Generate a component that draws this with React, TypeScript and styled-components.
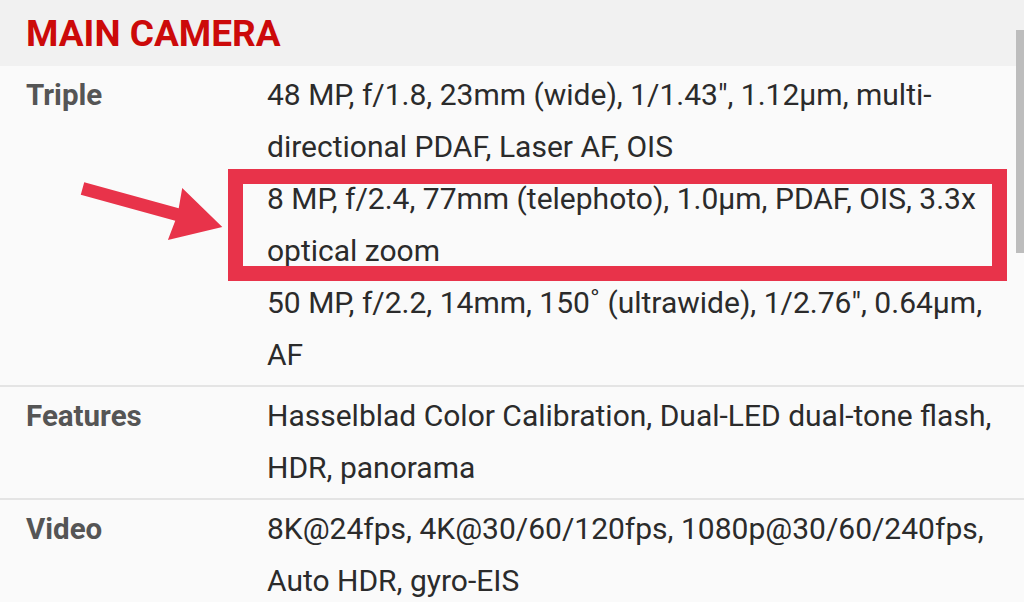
import * as React from "react";
import styled, { createGlobalStyle } from "styled-components";

const COLORS = {
  page: "#fafafa",
  header: "#f1f1f1",
  title: "#cc0a0a",
  label: "#555555",
  value: "#2b2b2b",
  rule: "#e4e4e4",
  mark: "#e8334a",
  scroll: "#bdbdbd",
};

const GlobalStyle = createGlobalStyle`
  html, body {
    margin: 0;
    padding: 0;
    background: ${COLORS.page};
    font-family: Roboto, "Liberation Sans", sans-serif;
  }
`;

const Page = styled.div`
  position: relative;
  width: 1024px;
  height: 602px;
  overflow: hidden;
  background: ${COLORS.page};
`;

const Header = styled.div`
  height: 66px;
  display: flex;
  align-items: center;
  padding-left: 26px;
  background: ${COLORS.header};
`;

const Title = styled.h2`
  margin: 0;
  font-size: 37px;
  font-weight: 700;
  color: ${COLORS.title};
`;

const Row = styled.div`
  display: grid;
  grid-template-columns: 241px 1fr;
  padding: 3px 0 4px 26px;
  border-bottom: 2px solid ${COLORS.rule};
  &:last-child {
    border-bottom: none;
  }
`;

const Label = styled.div`
  font-size: 29.5px;
  line-height: 52px;
  font-weight: 700;
  color: ${COLORS.label};
`;

const Values = styled.div`
  display: flex;
  flex-direction: column;
`;

const Entry = styled.div<{ $marked?: boolean }>`
  position: relative;
  &::before {
    content: "";
    display: ${(p) => (p.$marked ? "block" : "none")};
    position: absolute;
    left: -39px;
    top: -4px;
    width: 779px;
    height: 112px;
    box-sizing: border-box;
    border: 15px solid ${COLORS.mark};
    pointer-events: none;
  }
`;

const Line = styled.div`
  font-size: 30px;
  line-height: 52px;
  color: ${COLORS.value};
  white-space: nowrap;
`;

const Arrow = styled.svg`
  position: absolute;
  left: 0;
  top: 0;
  width: 1024px;
  height: 602px;
  pointer-events: none;
`;

const ScrollThumb = styled.div`
  position: absolute;
  right: 0;
  top: 30px;
  width: 8px;
  height: 223px;
  background: ${COLORS.scroll};
`;

const SPECS = [
  {
    label: "Triple",
    entries: [
      { lines: ["48 MP, f/1.8, 23mm (wide), 1/1.43\", 1.12µm, multi-", "directional PDAF, Laser AF, OIS"] },
      { lines: ["8 MP, f/2.4, 77mm (telephoto), 1.0µm, PDAF, OIS, 3.3x", "optical zoom"], marked: true },
      { lines: ["50 MP, f/2.2, 14mm, 150˚ (ultrawide), 1/2.76\", 0.64µm,", "AF"] },
    ],
  },
  {
    label: "Features",
    entries: [{ lines: ["Hasselblad Color Calibration, Dual-LED dual-tone flash,", "HDR, panorama"] }],
  },
  {
    label: "Video",
    entries: [{ lines: ["8K@24fps, 4K@30/60/120fps, 1080p@30/60/240fps,", "Auto HDR, gyro-EIS"] }],
  },
];

export default function App() {
  return (
    <Page>
      <GlobalStyle />
      <Header>
        <Title>MAIN CAMERA</Title>
      </Header>
      {SPECS.map((spec) => (
        <Row key={spec.label}>
          <Label>{spec.label}</Label>
          <Values>
            {spec.entries.map((entry, i) => (
              <Entry key={i} $marked={entry.marked}>
                {entry.lines.map((l) => (
                  <Line key={l}>{l}</Line>
                ))}
              </Entry>
            ))}
          </Values>
        </Row>
      ))}
      <Arrow viewBox="0 0 1024 602">
        <polygon
          transform="translate(82.5 188.5) rotate(15.4)"
          points="0,-6.5 98,-6.5 96,-27 145,0 96,27 98,6.5 0,6.5"
          fill={COLORS.mark}
        />
      </Arrow>
      <ScrollThumb />
    </Page>
  );
}
